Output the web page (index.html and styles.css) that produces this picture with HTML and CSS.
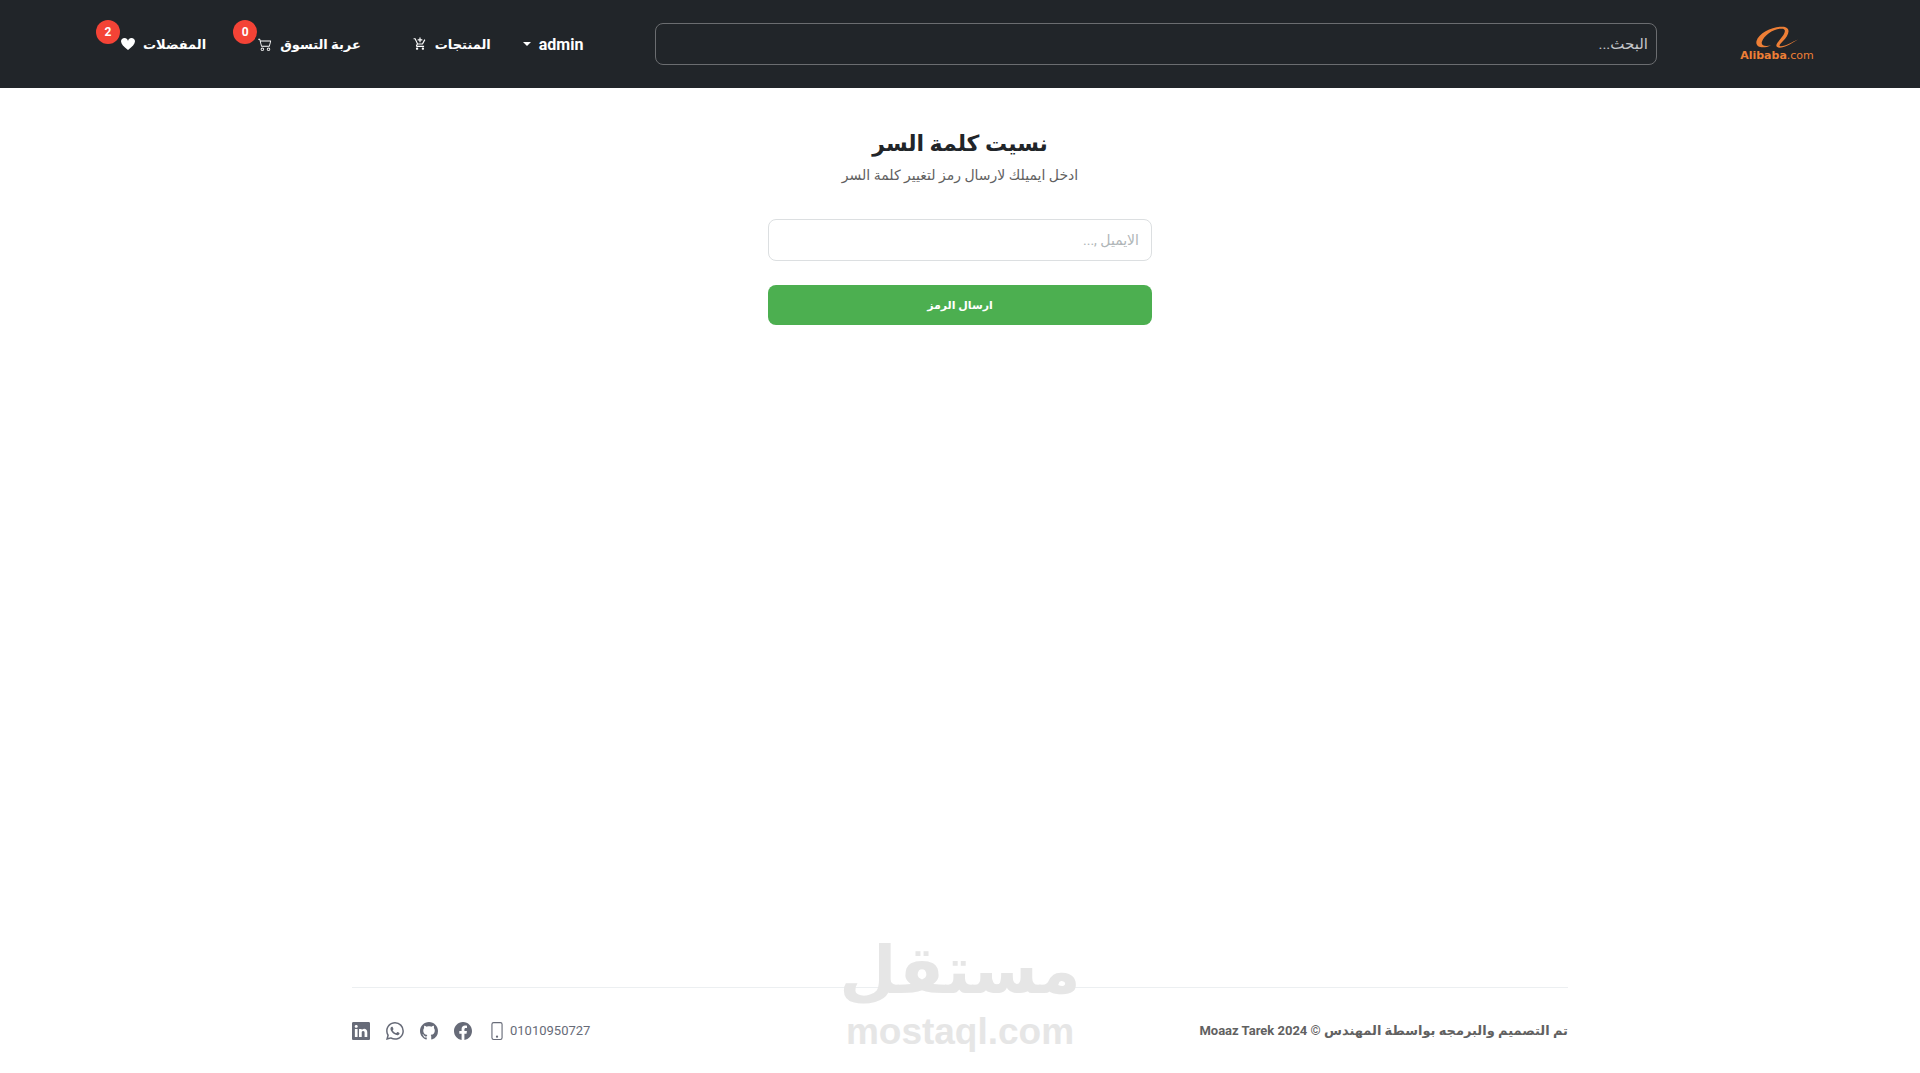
FILE: index.html
```html
<!DOCTYPE html>
<html lang="ar" dir="rtl">
<head>
    <meta charset="UTF-8">
    <meta name="viewport" content="width=device-width, initial-scale=1.0">
    <title>نسيت كلمة السر</title>
    <link rel="stylesheet" href="styles.css">
</head>
<body>
    <header class="navbar">
        <a href="#" class="logo" aria-label="Alibaba.com">
            <svg class="logo-mark" viewBox="0 0 44 22" aria-hidden="true">
                <path d="M16 19.500C8 23 0 21.500 1.500 15C4 6 20-.500 29 .8C37 2.500 33 10 28 15C25 18 23 20.300 26 20.300C31 20 37 16 43 13.500C36 18 29 22 24 21.700C19 21 22 17 25 13.500C29 9 32 4 28 2.800C20 1.500 9 9 7 15.500C5.500 20 10 20.500 16 19.500Z" fill="#ee7f36"/>
            </svg>
            <span class="logo-text"><b>Alibaba</b>.com</span>
        </a>
        <input type="search" class="search" placeholder="البحث..." aria-label="البحث">
        <nav class="nav-links">
            <button type="button" class="nav-item user">
                admin
                <svg class="caret" viewBox="0 0 8 4" aria-hidden="true"><path d="M0 0h8L4 4z" fill="currentColor"/></svg>
            </button>
            <a href="#" class="nav-item">
                المنتجات
                <svg viewBox="0 0 24 24" fill="currentColor" aria-hidden="true"><path d="M11 9h2V6h3V4h-3V1h-2v3H8v2h3v3zm-4 9c-1.100 0-2 .9-2 2s.9 2 2 2 2-.9 2-2-.9-2-2-2zm10 0c-1.100 0-2 .9-2 2s.9 2 2 2 2-.9 2-2-.9-2-2-2zm-8.900-5h7.450c.75 0 1.410-.41 1.750-1.030L21.160 4.960 19.420 4l-3.870 7H8.530L4.270 2H1v2h2l3.600 7.590-1.350 2.440C4.520 15.370 5.480 17 7 17h12v-2H7l1.100-2z"/></svg>
            </a>
            <a href="#" class="nav-item">
                عربة التسوق
                <svg viewBox="0 0 16 16" fill="currentColor" aria-hidden="true"><path d="M0 2.500A.5.5 0 0 1 .5 2H2a.5.5 0 0 1 .485.379L2.890 4H14.500a.5.5 0 0 1 .485.621l-1.500 6A.5.5 0 0 1 13 11H4a.5.5 0 0 1-.485-.379L1.610 3H.5a.5.5 0 0 1-.5-.5zM3.140 5l1.250 5h8.220l1.250-5H3.140zM5 13a1 1 0 1 0 0 2 1 1 0 0 0 0-2zm-2 1a2 2 0 1 1 4 0 2 2 0 0 1-4 0zm9-1a1 1 0 1 0 0 2 1 1 0 0 0 0-2zm-2 1a2 2 0 1 1 4 0 2 2 0 0 1-4 0z"/></svg>
                <span class="badge">0</span>
            </a>
            <a href="#" class="nav-item">
                المفضلات
                <svg viewBox="0 0 16 16" fill="currentColor" aria-hidden="true"><path d="M4 1c2.210 0 4 1.755 4 3.920C8 2.755 9.790 1 12 1s4 1.755 4 3.920c0 3.263-3.234 6.414-7.608 9.608a.513.513 0 0 1-.784 0C3.234 11.334 0 8.183 0 4.920 0 2.755 1.790 1 4 1z"/></svg>
                <span class="badge">2</span>
            </a>
        </nav>
    </header>

    <main class="content">
        <h1>نسيت كلمة السر</h1>
        <p>ادخل ايميلك لارسال رمز لتغيير كلمة السر</p>
        <form class="reset-form">
            <input type="text" placeholder="الايميل ,..." aria-label="الايميل">
            <button type="submit">ارسال الرمز</button>
        </form>
    </main>

    <footer class="footer">
        <div class="copyright">تم التصميم والبرمجه بواسطة المهندس © 2024 Moaaz Tarek</div>
        <div class="contact">
            <a href="#" class="phone">
                01010950727
                <svg viewBox="0 0 16 16" fill="currentColor" aria-hidden="true"><path d="M11 1a1 1 0 0 1 1 1v12a1 1 0 0 1-1 1H5a1 1 0 0 1-1-1V2a1 1 0 0 1 1-1h6zM5 0a2 2 0 0 0-2 2v12a2 2 0 0 0 2 2h6a2 2 0 0 0 2-2V2a2 2 0 0 0-2-2H5z"/><path d="M8 14a1 1 0 1 0 0-2 1 1 0 0 0 0 2z"/></svg>
            </a>
            <a href="#" aria-label="Facebook">
                <svg viewBox="0 0 16 16" fill="currentColor"><path d="M16 8.049c0-4.446-3.582-8.050-8-8.050C3.580 0-.002 3.603-.002 8.050c0 4.017 2.926 7.347 6.750 7.951v-5.625h-2.030V8.050H6.750V6.275c0-2.017 1.195-3.131 3.022-3.131.876 0 1.791.157 1.791.157v1.980h-1.009c-.993 0-1.303.621-1.303 1.258v1.510h2.218l-.354 2.326H9.250V16c3.824-.604 6.750-3.934 6.750-7.951z"/></svg>
            </a>
            <a href="#" aria-label="GitHub">
                <svg viewBox="0 0 16 16" fill="currentColor"><path d="M8 0C3.580 0 0 3.580 0 8c0 3.540 2.290 6.530 5.470 7.590.4.070.55-.17.55-.38 0-.19-.010-.82-.010-1.490-2.010.37-2.530-.49-2.690-.94-.090-.23-.48-.94-.82-1.130-.28-.15-.68-.52-.010-.53.63-.010 1.080.58 1.230.82.72 1.210 1.870.87 2.330.66.070-.52.28-.87.51-1.070-1.780-.2-3.640-.89-3.640-3.950 0-.87.31-1.590.82-2.150-.080-.2-.36-1.020.080-2.120 0 0 .67-.21 2.200.82.64-.18 1.320-.27 2-.27.68 0 1.360.090 2 .27 1.530-1.040 2.200-.82 2.200-.82.44 1.100.16 1.920.080 2.120.51.56.82 1.270.82 2.150 0 3.070-1.870 3.750-3.650 3.950.29.25.54.73.54 1.480 0 1.070-.010 1.930-.010 2.200 0 .21.15.46.55.38A8.012 8.012 0 0 0 16 8c0-4.420-3.580-8-8-8z"/></svg>
            </a>
            <a href="#" aria-label="WhatsApp">
                <svg viewBox="0 0 16 16" fill="currentColor"><path d="M13.601 2.326A7.854 7.854 0 0 0 7.994 0C3.627 0 .068 3.558.064 7.926c0 1.399.366 2.760 1.057 3.965L0 16l4.204-1.102a7.933 7.933 0 0 0 3.790.965h.004c4.368 0 7.926-3.558 7.930-7.930A7.898 7.898 0 0 0 13.600 2.326zM7.994 14.521a6.573 6.573 0 0 1-3.356-.920l-.240-.144-2.494.654.666-2.433-.156-.251a6.560 6.560 0 0 1-1.007-3.505c0-3.626 2.957-6.584 6.591-6.584a6.560 6.560 0 0 1 4.660 1.931 6.557 6.557 0 0 1 1.928 4.660c-.004 3.639-2.961 6.592-6.592 6.592zm3.615-4.934c-.197-.099-1.170-.578-1.353-.646-.182-.065-.315-.099-.445.099-.133.197-.513.646-.627.775-.114.133-.232.148-.430.050-.197-.100-.836-.308-1.592-.985-.590-.525-.985-1.175-1.103-1.372-.114-.198-.011-.304.088-.403.087-.088.197-.232.296-.346.100-.114.133-.198.198-.330.065-.134.034-.248-.015-.347-.050-.099-.445-1.076-.612-1.470-.160-.389-.323-.335-.445-.340-.114-.007-.247-.007-.380-.007a.729.729 0 0 0-.529.247c-.182.198-.691.677-.691 1.654 0 .977.710 1.916.810 2.049.098.133 1.394 2.132 3.383 2.992.470.205.840.326 1.129.418.475.152.904.129 1.246.080.380-.058 1.171-.480 1.338-.943.164-.464.164-.860.114-.943-.049-.084-.182-.133-.380-.232z"/></svg>
            </a>
            <a href="#" aria-label="LinkedIn">
                <svg viewBox="0 0 16 16" fill="currentColor"><path d="M0 1.146C0 .513.526 0 1.175 0h13.650C15.474 0 16 .513 16 1.146v13.708c0 .633-.526 1.146-1.175 1.146H1.175C.526 16 0 15.487 0 14.854V1.146zm4.943 12.248V6.169H2.542v7.225h2.401zm-1.200-8.212c.837 0 1.358-.554 1.358-1.248-.015-.709-.520-1.248-1.342-1.248-.822 0-1.359.540-1.359 1.248 0 .694.521 1.248 1.327 1.248h.016zm4.908 8.212V9.359c0-.216.016-.432.080-.586.173-.431.568-.878 1.232-.878.869 0 1.216.662 1.216 1.634v3.865h2.401V9.250c0-2.220-1.184-3.252-2.764-3.252-1.274 0-1.845.700-2.165 1.193v.025h-.016l.016-.025V6.169h-2.400c.030.678 0 7.225 0 7.225h2.400z"/></svg>
            </a>
        </div>
    </footer>

    <div class="watermark">
        <div class="watermark-name">مستقل</div>
        <div class="watermark-url" dir="ltr">mostaql.com</div>
    </div>
</body>
</html>
```

FILE: styles.css
```css
* {
    box-sizing: border-box;
}

body {
    font-family: Roboto, "DejaVu Sans", sans-serif;
    margin: 0;
    min-height: 100vh;
    display: flex;
    flex-direction: column;
    position: relative;
    background-color: #fff;
    color: #212529;
}

a {
    color: inherit;
    text-decoration: none;
}

/* Navbar */
.navbar {
    display: flex;
    align-items: center;
    height: 88px;
    padding: 0 104px 0 121px;
    background-color: #212529;
    color: #fff;
}

.logo {
    display: flex;
    flex-direction: column;
    align-items: center;
    gap: 2px;
    width: 78px;
    margin-left: 81px;
    color: #ee7f36;
}

.logo-mark {
    width: 44px;
    height: 22px;
}

.logo-text {
    direction: ltr;
    font-family: "DejaVu Sans", sans-serif;
    font-size: 11px;
    line-height: 12px;
}

.search {
    flex: 1;
    min-width: 0;
    height: 42px;
    padding: 0 8px;
    border: 1px solid #6b6d70;
    border-radius: 8px;
    background: transparent;
    color: #fff;
    font-family: inherit;
    font-size: 15px;
}

.search::placeholder {
    color: #c5c7c9;
}

.nav-links {
    display: flex;
    align-items: center;
    gap: 52px;
    margin-right: 72px;
}

.nav-item {
    display: flex;
    align-items: center;
    gap: 8px;
    position: relative;
    font-size: 13px;
    font-weight: bold;
    white-space: nowrap;
}

.nav-item svg {
    width: 14px;
    height: 14px;
}

.user {
    margin-left: -20px;
    padding: 0;
    border: none;
    background: none;
    color: inherit;
    font-family: inherit;
    font-size: 16px;
    cursor: pointer;
}

.user .caret {
    width: 8px;
    height: 4px;
}

.badge {
    position: absolute;
    left: -25px;
    bottom: 8px;
    width: 24px;
    height: 24px;
    border-radius: 50%;
    background-color: #f44336;
    font-size: 12px;
    line-height: 24px;
    text-align: center;
}

/* Formulaire */
.content {
    flex: 1;
    display: flex;
    flex-direction: column;
    align-items: center;
    padding-top: 40px;
}

.content h1 {
    margin: 0;
    font-size: 22px;
    line-height: 32px;
}

.content p {
    margin: 4px 0 32px;
    color: #616161;
    font-size: 14px;
    line-height: 23px;
}

.reset-form {
    display: flex;
    flex-direction: column;
    gap: 24px;
    width: 384px;
    max-width: 90%;
}

.reset-form input {
    height: 42px;
    padding: 0 12px;
    border: 1px solid #dcdfe1;
    border-radius: 8px;
    font-family: inherit;
    font-size: 14px;
}

.reset-form input::placeholder {
    color: #b0b6b8;
}

.reset-form button {
    height: 40px;
    border: none;
    border-radius: 8px;
    background-color: #4caf50;
    color: #fff;
    font-family: inherit;
    font-size: 11px;
    font-weight: bold;
    cursor: pointer;
}

/* Footer */
.footer {
    display: flex;
    justify-content: space-between;
    align-items: center;
    width: calc(100% - 64px);
    max-width: 1216px;
    height: 86px;
    margin: 0 auto;
    border-top: 1px solid #eceff1;
    color: #616161;
}

.copyright {
    font-size: 13px;
    font-weight: bold;
}

.contact {
    display: flex;
    align-items: center;
    gap: 16px;
    color: #676b78;
}

.contact a {
    display: flex;
    align-items: center;
    gap: 4px;
}

.contact svg {
    width: 18px;
    height: 18px;
}

.phone {
    font-size: 13px;
}

/* Filigrane */
.watermark {
    position: absolute;
    left: 0;
    right: 0;
    bottom: 20px;
    color: #e6e6e6;
    font-weight: bold;
    text-align: center;
    pointer-events: none;
}

.watermark-name {
    font-family: "DejaVu Sans", sans-serif;
    font-size: 66px;
    line-height: 80px;
}

.watermark-url {
    font-family: "Liberation Sans", sans-serif;
    font-size: 37px;
    line-height: 42px;
}
```
